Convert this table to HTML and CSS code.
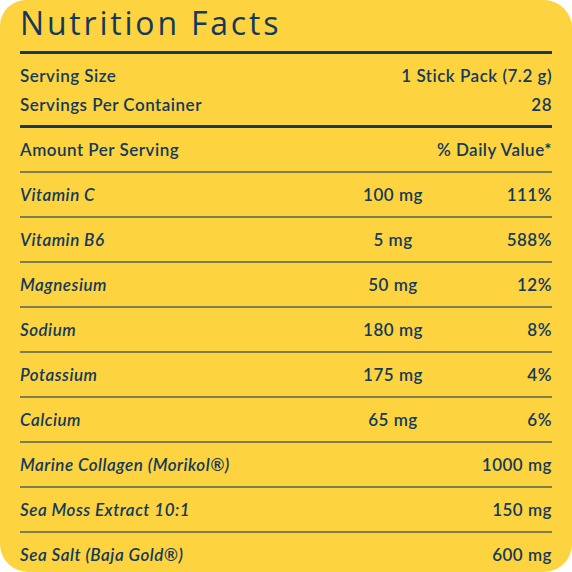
FILE: index.html
```html
<!DOCTYPE html>
<html lang="en">
<head>
  <meta charset="UTF-8">
  <meta name="viewport" content="width=device-width, initial-scale=1.0">
  <title>Nutrition Facts</title>
  <link rel="stylesheet" href="styles.css">
</head>
<body>

  <div class="facts-card">
    <h1 class="facts-title">Nutrition Facts</h1>

    <div class="serving-block">
      <div class="serving-row">
        <span>Serving Size</span>
        <span>1 Stick Pack (7.2 g)</span>
      </div>
      <div class="serving-row">
        <span>Servings Per Container</span>
        <span>28</span>
      </div>
    </div>

    <div class="amount-head">
      <span>Amount Per Serving</span>
      <span>% Daily Value*</span>
    </div>

    <div class="nutrient-row">
      <span class="nutrient-name">Vitamin C</span>
      <span class="nutrient-amount">100 mg</span>
      <span class="nutrient-dv">111%</span>
    </div>
    <div class="nutrient-row">
      <span class="nutrient-name">Vitamin B6</span>
      <span class="nutrient-amount">5 mg</span>
      <span class="nutrient-dv">588%</span>
    </div>
    <div class="nutrient-row">
      <span class="nutrient-name">Magnesium</span>
      <span class="nutrient-amount">50 mg</span>
      <span class="nutrient-dv">12%</span>
    </div>
    <div class="nutrient-row">
      <span class="nutrient-name">Sodium</span>
      <span class="nutrient-amount">180 mg</span>
      <span class="nutrient-dv">8%</span>
    </div>
    <div class="nutrient-row">
      <span class="nutrient-name">Potassium</span>
      <span class="nutrient-amount">175 mg</span>
      <span class="nutrient-dv">4%</span>
    </div>
    <div class="nutrient-row">
      <span class="nutrient-name">Calcium</span>
      <span class="nutrient-amount">65 mg</span>
      <span class="nutrient-dv">6%</span>
    </div>

    <div class="blend-row">
      <span class="nutrient-name">Marine Collagen (Morikol®)</span>
      <span class="nutrient-dv">1000 mg</span>
    </div>
    <div class="blend-row">
      <span class="nutrient-name">Sea Moss Extract 10:1</span>
      <span class="nutrient-dv">150 mg</span>
    </div>
    <div class="blend-row">
      <span class="nutrient-name">Sea Salt (Baja Gold®)</span>
      <span class="nutrient-dv">600 mg</span>
    </div>
  </div>

</body>
</html>
```

FILE: styles.css
```css
body {
  font-family: Lato, "Open Sans", Arial, sans-serif;
  background-color: #ffffff;
  margin: 0;
  padding: 0;
}

.facts-card {
  height: 572px;
  overflow: hidden;
  box-sizing: border-box;
  padding: 3px 20px 0 20px;
  background: #fdd33f;
  color: #133a5b;
  border-radius: 26px 28px 28px 28px;
}

.facts-title {
  margin: 0;
  padding-bottom: 8px;
  font-family: "Open Sans", Lato, sans-serif;
  font-size: 32px;
  font-weight: 400;
  letter-spacing: 2.8px;
  line-height: 40px;
  border-bottom: 3px solid #133a5b;
}

.serving-row,
.amount-head,
.blend-row {
  display: flex;
  justify-content: space-between;
}

.serving-block,
.amount-head,
.nutrient-row,
.blend-row {
  font-size: 17px;
  font-weight: 600;
  letter-spacing: 0.5px;
}

.serving-block {
  padding: 7px 0 6px;
  border-bottom: 3px solid #133a5b;
}

.serving-row {
  line-height: 29px;
}

.amount-head,
.nutrient-row,
.blend-row {
  padding: 11px 0;
  line-height: 21px;
  border-bottom: 2px solid rgba(19, 58, 91, 0.55);
}

.nutrient-row {
  display: grid;
  grid-template-columns: 1fr 120px 99px;
}

.nutrient-name {
  font-style: italic;
}

.nutrient-amount {
  text-align: center;
}

.nutrient-dv {
  text-align: right;
}
```
